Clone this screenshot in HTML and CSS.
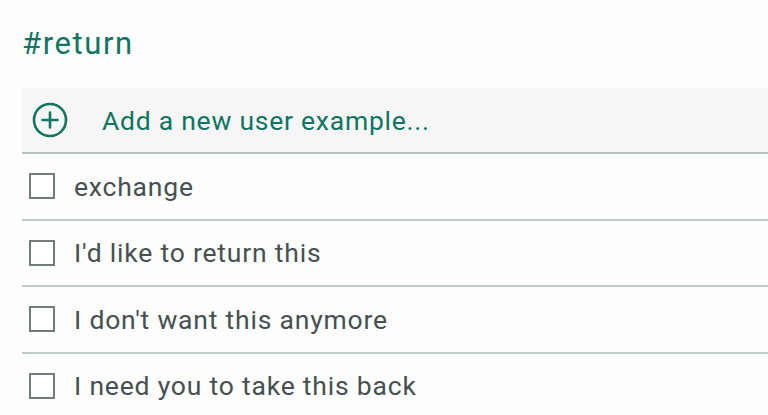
FILE: index.html
```html
<!DOCTYPE html>
<html>
<head>
<meta charset="utf-8">
<link rel="stylesheet" href="styles.css">
</head>
<body>
<div class="page">
  <h1 class="title">#return</h1>
  <div class="list">
    <div class="add-row">
      <svg class="add-icon" width="36" height="36" viewBox="0 0 36 36">
        <circle cx="18" cy="18" r="16" fill="none" stroke="#0f7562" stroke-width="2.6"/>
        <path d="M18 10.5 V25.5 M10.5 18 H25.5" stroke="#0f7562" stroke-width="2.6" stroke-linecap="round"/>
      </svg>
      <span class="add-text">Add a new user example...</span>
    </div>
    <div class="row"><span class="box"></span><span class="label">exchange</span></div>
    <div class="row"><span class="box"></span><span class="label">I'd like to return this</span></div>
    <div class="row"><span class="box"></span><span class="label">I don't want this anymore</span></div>
    <div class="row"><span class="box"></span><span class="label">I need you to take this back</span></div>
  </div>
</div>
</body>
</html>
```
FILE: styles.css
```css
html, body {
  margin: 0;
  padding: 0;
  background: #fdfdfd;
}
.page {
  padding: 0 0 0 22px;
  font-family: Roboto, "Noto Sans", sans-serif;
}
.title {
  margin: 0;
  height: 88px;
  box-sizing: border-box;
  padding-top: 24px;
  font-size: 31px;
  font-weight: 400;
  letter-spacing: 1.6px;
  color: #0f7562;
  line-height: 40px;
}
.list {
  display: flex;
  flex-direction: column;
}
.add-row {
  display: flex;
  align-items: center;
  height: 64px;
  background: #f6f6f6;
  border-bottom: 2px solid #b5c1c1;
}
.add-icon {
  margin-left: 10px;
  flex: none;
}
.add-text {
  margin-left: 34px;
  font-size: 26.5px;
  letter-spacing: 0.75px;
  color: #0f7562;
}
.row {
  display: flex;
  align-items: center;
  height: 64.5px;
  border-bottom: 2px solid #c0caca;
}
.row:last-child {
  border-bottom: none;
}
.box {
  flex: none;
  width: 22px;
  height: 22px;
  border: 2px solid #737c7c;
  margin-left: 7px;
  background: #fff;
}
.label {
  margin-left: 19px;
  font-size: 26.5px;
  letter-spacing: 0.8px;
  color: #465051;
}
```
